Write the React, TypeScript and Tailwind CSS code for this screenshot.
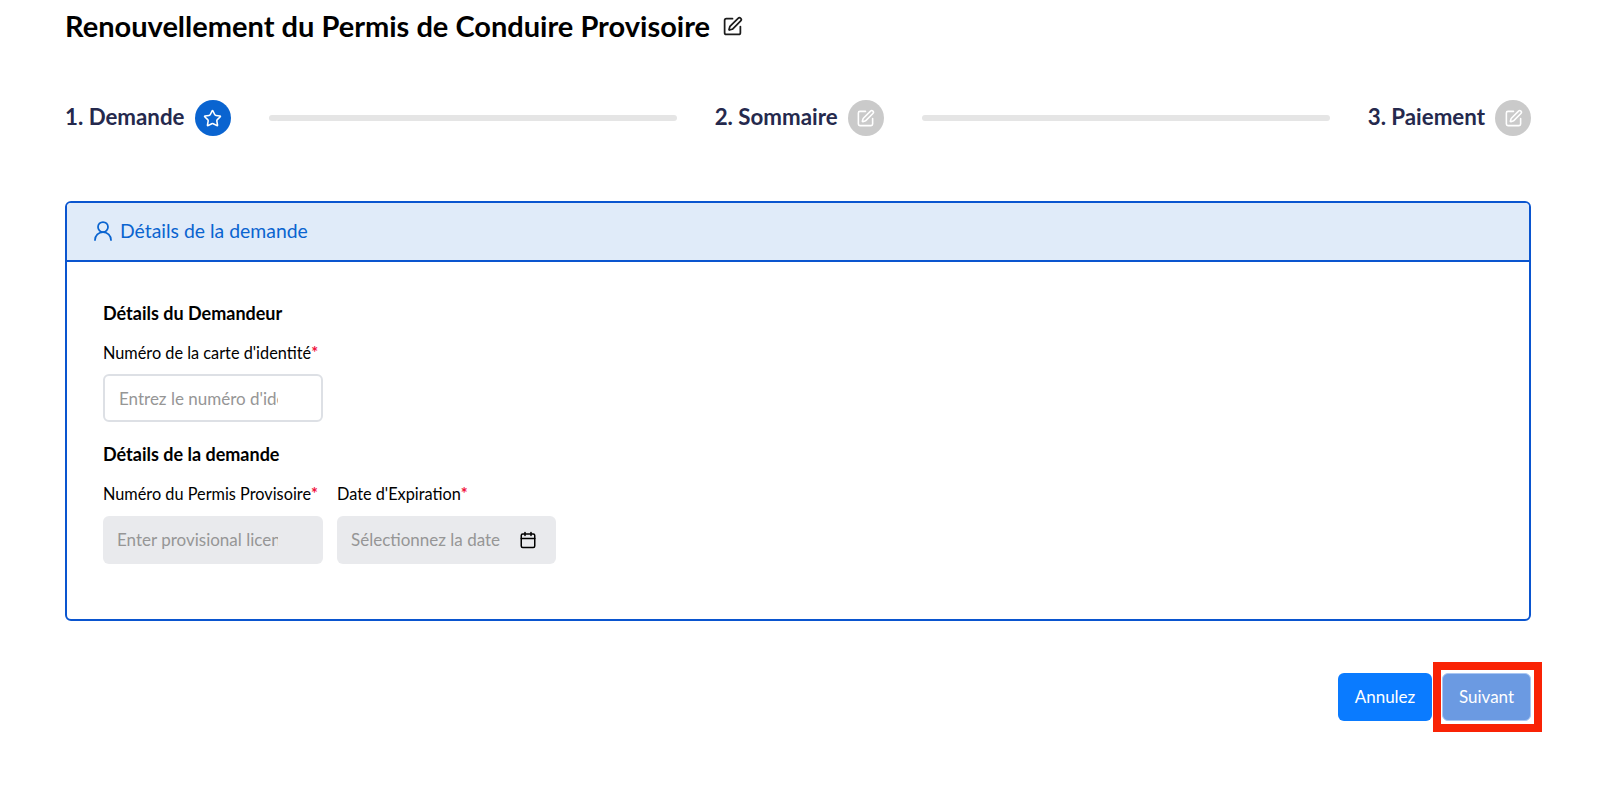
import { Calendar, Star, SquarePen, UserRound } from 'lucide-react'

const font = 'font-["Lato","Open_Sans",sans-serif]'

function StepBadge({ active }: { active?: boolean }) {
  return (
    <span
      className={`w-9 h-9 shrink-0 rounded-full flex items-center justify-center text-white ${
        active ? 'bg-[#0a64d0]' : 'bg-[#cacaca]'
      }`}
    >
      {active ? <Star size={19} strokeWidth={2} /> : <SquarePen size={19} strokeWidth={2} />}
    </span>
  )
}

function Step({ label, active }: { label: string; active?: boolean }) {
  return (
    <div className="flex items-center gap-[10px] shrink-0">
      <span className="text-[22.3px] font-bold text-[#25294d] pb-[3px]">{label}</span>
      <StepBadge active={active} />
    </div>
  )
}

function Connector() {
  return <div className="flex-1 h-[6px] rounded-full bg-[#e5e5e5] mx-[38px]" />
}

function FieldLabel({ text }: { text: string }) {
  return (
    <label className="block h-[22px] text-[16.3px] leading-[22px] text-black whitespace-nowrap">
      {text}
      <span className="text-[#f0103c] font-bold">*</span>
    </label>
  )
}

export default function App() {
  return (
    <div className={`w-[1600px] h-[804px] bg-white overflow-hidden relative ${font}`}>
      <div className="pl-[65px] pr-[69px]">
        <div className="flex items-center gap-3 h-[52px]">
          <h1 className="text-[29px] font-bold text-black leading-[52px]">
            Renouvellement du Permis de Conduire Provisoire
          </h1>
          <SquarePen size={21} strokeWidth={2} className="text-[#1c1c1c]" />
        </div>

        <div className="flex items-center h-9 mt-[48px]">
          <Step label="1. Demande" active />
          <Connector />
          <Step label="2. Sommaire" />
          <Connector />
          <Step label="3. Paiement" />
        </div>

        <section className="mt-[65px] h-[420px] border-2 border-[#0a55cf] rounded-md overflow-hidden">
          <div className="h-[59px] bg-[#e0ebf9] border-b-2 border-[#0a55cf] flex items-center gap-[5px] pl-6 text-[#0a64d0]">
            <UserRound size={24} strokeWidth={1.75} className="mb-[2px]" />
            <span className="text-[19.4px] pb-[2px]">Détails de la demande</span>
          </div>

          <div className="pl-9 pt-[39px]">
            <h2 className="text-[18px] font-bold text-black leading-[24px]">Détails du Demandeur</h2>
            <div className="mt-[17px]">
              <FieldLabel text="Numéro de la carte d'identité" />
              <input
                placeholder="Entrez le numéro d'identité"
                className="mt-[10px] block w-[220px] h-[48px] pl-[14px] pr-[43px] text-[17px] bg-white border-2 border-[#dde0e5] rounded-md outline-none placeholder:text-[#969696]"
              />
            </div>

            <h2 className="mt-5 text-[18px] font-bold text-black leading-[24px]">Détails de la demande</h2>
            <div className="mt-[17px] flex gap-[14px]">
              <div className="w-[220px]">
                <FieldLabel text="Numéro du Permis Provisoire" />
                <input
                  disabled
                  placeholder="Enter provisional license"
                  className="mt-[11px] block w-[220px] h-[48px] pl-[14px] pr-[45px] pb-[2px] text-[17px] bg-[#e9eaed] rounded-md outline-none placeholder:text-[#969696]"
                />
              </div>
              <div className="w-[219px]">
                <FieldLabel text="Date d'Expiration" />
                <div className="mt-[11px] h-[48px] px-[14px] bg-[#e9eaed] rounded-md flex items-center justify-between">
                  <span className="text-[17px] text-[#969696] whitespace-nowrap">Sélectionnez la date</span>
                  <Calendar size={18} strokeWidth={2} className="text-black mr-[5px]" />
                </div>
              </div>
            </div>
          </div>
        </section>

        <div className="mt-[52px] flex justify-end gap-[10px]">
          <button className="w-[94px] h-[48px] rounded-md bg-[#0a7bff] text-white text-[17px]">Annulez</button>
          <button className="w-[89px] h-[48px] rounded-md bg-[#6b9ae2] border border-[#a9c6f2] text-white text-[17px]">
            Suivant
          </button>
        </div>
      </div>

      {/* red highlight drawn over the screenshot */}
      <div className="absolute left-[1433px] top-[662px] w-[109px] h-[70px] border-[8px] border-[#f92305] pointer-events-none" />
    </div>
  )
}
